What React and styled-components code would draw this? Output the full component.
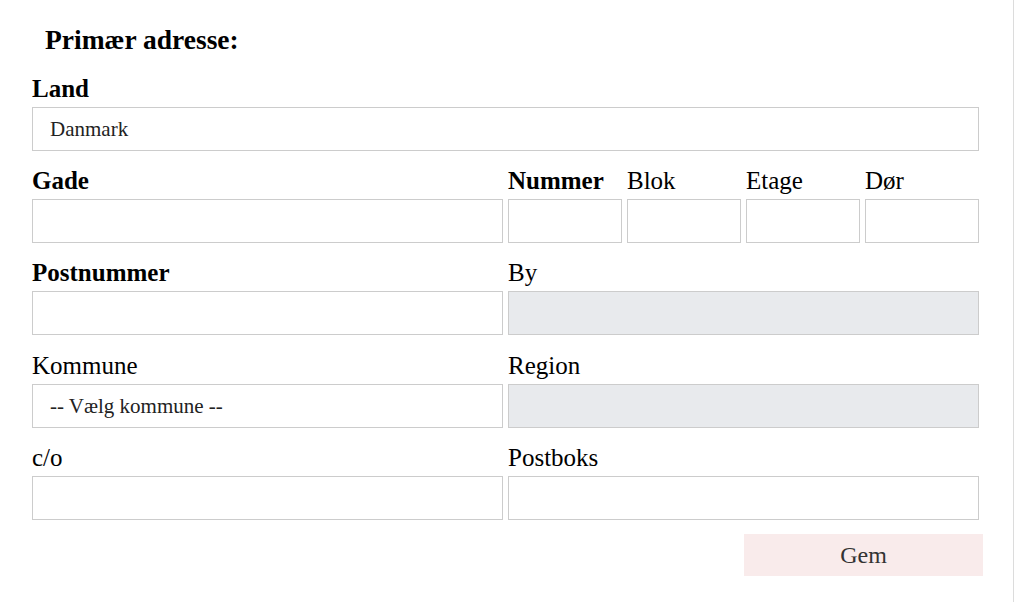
import React from "react";
import styled, { createGlobalStyle } from "styled-components";

const Global = createGlobalStyle`
  html, body { margin: 0; padding: 0; background: #fff; }
  body { font-family: "Liberation Serif", "Times New Roman", serif; color: #000; }
`;

const Page = styled.div`
  width: 1013px;
  height: 602px;
  border-right: 1px solid #dcdcdc;
  box-sizing: content-box;
  overflow: hidden;
`;

const Form = styled.form`
  width: 947px;
  padding: 23px 0 0 32px;
  display: flex;
  flex-direction: column;
  gap: 15px;
`;

const Heading = styled.h3`
  margin: 0 0 3px 13px;
  font-size: 27.5px;
  font-weight: bold;
  line-height: 33px;
`;

const Row = styled.div`
  display: grid;
  grid-template-columns: ${(p) => p.$cols || "1fr 1fr"};
  column-gap: 5px;
  margin-top: ${(p) => p.$shift || 0}px;
`;

const Field = styled.div`
  display: flex;
  flex-direction: column;
  min-width: 0;
`;

const Label = styled.label`
  font-size: 25px;
  line-height: 30px;
  height: 30px;
  margin-bottom: 3px;
  font-weight: ${(p) => (p.$required ? "bold" : "normal")};
  white-space: nowrap;
`;

const Input = styled.input`
  box-sizing: border-box;
  width: 100%;
  height: 44px;
  border: 1px solid #cccccc;
  background: ${(p) => (p.readOnly ? "#e8eaed" : "#fff")};
  padding: 0 17px;
  font-family: "Liberation Serif", "Times New Roman", serif;
  font-size: 21px;
  color: #222;
  outline: none;
`;

const Select = styled.div`
  box-sizing: border-box;
  height: 44px;
  border: 1px solid #cccccc;
  background: #fff;
  padding: 0 17px;
  display: flex;
  align-items: center;
  font-size: 21px;
  color: #222;
`;

const Group = styled.div`
  display: grid;
  grid-template-columns: repeat(4, 1fr);
  column-gap: 5px;
`;

const Actions = styled.div`
  display: flex;
  justify-content: flex-end;
  margin: -1px -4px 0 0;
`;

const Button = styled.button`
  width: 239px;
  height: 42px;
  border: none;
  background: #f9ebeb;
  color: #333;
  font-family: "Liberation Serif", "Times New Roman", serif;
  font-size: 24px;
  cursor: pointer;
`;

export default function App() {
  return (
    <Page>
      <Global />
      <Form onSubmit={(e) => e.preventDefault()}>
        <Heading>Primær adresse:</Heading>
        <Row $cols="1fr">
          <Field>
            <Label $required>Land</Label>
            <Input defaultValue="Danmark" />
          </Field>
        </Row>
        <Row>
          <Field>
            <Label $required>Gade</Label>
            <Input />
          </Field>
          <Group>
            <Field>
              <Label $required>Nummer</Label>
              <Input />
            </Field>
            <Field>
              <Label>Blok</Label>
              <Input />
            </Field>
            <Field>
              <Label>Etage</Label>
              <Input />
            </Field>
            <Field>
              <Label>Dør</Label>
              <Input />
            </Field>
          </Group>
        </Row>
        <Row>
          <Field>
            <Label $required>Postnummer</Label>
            <Input />
          </Field>
          <Field>
            <Label>By</Label>
            <Input readOnly />
          </Field>
        </Row>
        <Row $shift={1}>
          <Field>
            <Label>Kommune</Label>
            <Select>-- Vælg kommune --</Select>
          </Field>
          <Field>
            <Label>Region</Label>
            <Input readOnly />
          </Field>
        </Row>
        <Row>
          <Field>
            <Label>c/o</Label>
            <Input />
          </Field>
          <Field>
            <Label>Postboks</Label>
            <Input />
          </Field>
        </Row>
        <Actions>
          <Button type="submit">Gem</Button>
        </Actions>
      </Form>
    </Page>
  );
}
